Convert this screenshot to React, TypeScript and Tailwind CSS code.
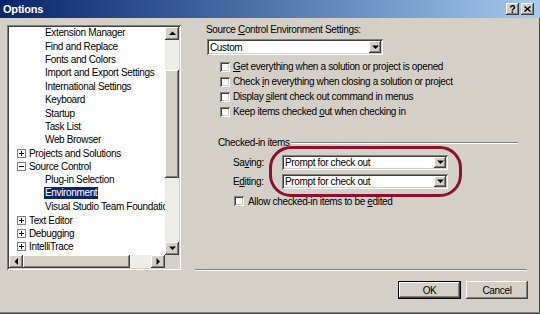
import React from 'react';

const sunken =
  'shadow-[inset_1px_1px_0_#808080,inset_-1px_-1px_0_#ffffff,inset_2px_2px_0_#404040,inset_-2px_-2px_0_#d4d0c8]';
const raised =
  'shadow-[inset_-1px_-1px_0_#404040,inset_1px_1px_0_#ffffff,inset_-2px_-2px_0_#808080,inset_2px_2px_0_#d4d0c8]';

type Dir = 'up' | 'down' | 'left' | 'right';

const Arrow = ({ dir }: { dir: Dir }) => {
  const pts: Record<Dir, string> = {
    up: '0,4 7,4 3.5,0.5',
    down: '0,0.5 7,0.5 3.5,4',
    left: '4,0 4,7 0.5,3.5',
    right: '0.5,0 0.5,7 4,3.5',
  };
  const vertical = dir === 'up' || dir === 'down';
  return (
    <svg width={vertical ? 7 : 5} height={vertical ? 5 : 7} viewBox={vertical ? '0 0 7 5' : '0 0 5 7'}>
      <polygon points={pts[dir]} fill="#000" />
    </svg>
  );
};

const ScrollBtn = ({ dir, className }: { dir: Dir; className: string }) => (
  <div className={`${className} bg-[#d4d0c8] ${raised} flex items-center justify-center shrink-0`}>
    <Arrow dir={dir} />
  </div>
);

interface TreeItem {
  label: string;
  level: 0 | 1;
  expand?: '+' | '-';
  selected?: boolean;
}

const treeItems: TreeItem[] = [
  { label: 'Extension Manager', level: 1 },
  { label: 'Find and Replace', level: 1 },
  { label: 'Fonts and Colors', level: 1 },
  { label: 'Import and Export Settings', level: 1 },
  { label: 'International Settings', level: 1 },
  { label: 'Keyboard', level: 1 },
  { label: 'Startup', level: 1 },
  { label: 'Task List', level: 1 },
  { label: 'Web Browser', level: 1 },
  { label: 'Projects and Solutions', level: 0, expand: '+' },
  { label: 'Source Control', level: 0, expand: '-' },
  { label: 'Plug-in Selection', level: 1 },
  { label: 'Environment', level: 1, selected: true },
  { label: 'Visual Studio Team Foundation Server', level: 1 },
  { label: 'Text Editor', level: 0, expand: '+' },
  { label: 'Debugging', level: 0, expand: '+' },
  { label: 'IntelliTrace', level: 0, expand: '+' },
  { label: 'Windows Forms Designer', level: 0, expand: '+' },
];

const Expander = ({ sign }: { sign: '+' | '-' }) => (
  <div className="w-[9px] h-[9px] border border-[#808080] bg-white flex items-center justify-center shrink-0">
    <svg width="5" height="5" viewBox="0 0 5 5">
      <rect x="0" y="2" width="5" height="1" fill="#000" />
      {sign === '+' && <rect x="2" y="0" width="1" height="5" fill="#000" />}
    </svg>
  </div>
);

const Tree = () => (
  <div className={`w-[174px] h-[245px] bg-white ${sunken} p-[2px] flex flex-col`}>
    <div className="flex flex-1 min-h-0">
      <div className="flex-1 overflow-hidden">
        <div className="-mt-[1px]">
          {treeItems.map((it) => (
            <div key={it.label} className="h-[13.4px] flex items-center whitespace-nowrap">
              {it.level === 0 ? (
                <div className="flex items-center pl-[8px]">
                  <Expander sign={it.expand!} />
                  <span className="ml-[3px]">{it.label}</span>
                </div>
              ) : (
                <div className="pl-[35px]">
                  <span
                    className={
                      it.selected ? 'bg-[#0a246a] text-white px-[1px] leading-[12px] inline-block' : 'px-[1px]'
                    }
                  >
                    {it.label}
                  </span>
                </div>
              )}
            </div>
          ))}
        </div>
      </div>
      {/* vertical scrollbar */}
      <div className="w-[14px] flex flex-col bg-[#eeede8]">
        <ScrollBtn dir="up" className="h-[13px]" />
        <div className="flex-1">
          <div className={`mt-[30px] h-[108px] bg-[#d4d0c8] ${raised}`} />
        </div>
        <ScrollBtn dir="down" className="h-[13px]" />
      </div>
    </div>
    {/* horizontal scrollbar */}
    <div className="h-[13px] flex">
      <div className="flex-1 flex bg-[#eeede8]">
        <ScrollBtn dir="left" className="w-[14px]" />
        <div className={`w-[107px] bg-[#d4d0c8] ${raised}`} />
        <div className="flex-1" />
        <ScrollBtn dir="right" className="w-[14px]" />
      </div>
      <div className="w-[14px] bg-[#d4d0c8]" />
    </div>
  </div>
);

const Combo = ({ value, className }: { value: string; className: string }) => (
  <div className={`${className} bg-white ${sunken} p-[2px] flex`}>
    <div className="flex-1 flex items-center pl-[1px] whitespace-nowrap overflow-hidden">{value}</div>
    <div className={`w-[12px] bg-[#d4d0c8] ${raised} flex items-center justify-center`}>
      <Arrow dir="down" />
    </div>
  </div>
);

const CheckBox = () => <div className={`w-[10px] h-[10px] bg-white ${sunken} shrink-0`} />;

const CheckRow = ({ children }: { children: React.ReactNode }) => (
  <div className="h-[15px] flex items-center gap-[3px] pl-[25px] whitespace-nowrap">
    <CheckBox />
    <span>{children}</span>
  </div>
);

const Button = ({ label, isDefault }: { label: string; isDefault?: boolean }) => (
  <div className={`h-[18px] ${isDefault ? 'w-[63px] border border-black' : 'w-[62px]'} bg-[#d4d0c8]`}>
    <div className={`w-full h-full ${raised} flex items-center justify-center`}>{label}</div>
  </div>
);

export default function App() {
  return (
    <div className="w-[540px] h-[314px] bg-[#d4d0c8] flex flex-col overflow-hidden text-black text-[10px] leading-[11px] tracking-[-0.35px] font-['Liberation_Sans',Arial,sans-serif] shadow-[inset_0_-1px_0_#404040,inset_0_-2px_0_#808080,inset_-1px_0_0_#404040]">
      {/* title bar */}
      <div className="h-[18px] shrink-0 bg-linear-to-r from-[#0a246a] to-[#a6caf0] flex items-center pl-[3px] pr-[6px]">
        <span className="text-white font-bold text-[11px] tracking-[-0.2px]">Options</span>
        <div className="ml-auto flex gap-[2px]">
          <div className={`w-[13px] h-[12px] bg-[#d4d0c8] ${raised} flex items-center justify-center font-bold text-[10px]`}>
            ?
          </div>
          <div className={`w-[13px] h-[12px] bg-[#d4d0c8] ${raised} flex items-center justify-center`}>
            <svg width="7" height="6" viewBox="0 0 7 6">
              <path d="M0.5 0.5 L6.5 5.5 M6.5 0.5 L0.5 5.5" stroke="#000" strokeWidth="1.4" />
            </svg>
          </div>
        </div>
      </div>

      <div className="flex-1 flex min-h-0">
        {/* left tree */}
        <div className="pl-[7px] pt-[7px]">
          <Tree />
        </div>

        {/* right settings */}
        <div className="ml-[14px] w-[333px] flex flex-col pb-[15px]">
          <div className="pt-[6px] pl-[11px] h-[17px]">
            Source <u>C</u>ontrol Environment Settings:
          </div>
          <Combo value="Custom" className="mt-[4px] ml-[12px] w-[176px] h-[16px]" />

          <div className="mt-[4px]">
            <CheckRow>
              <u>G</u>et everything when a solution or project is opened
            </CheckRow>
            <CheckRow>
              Check <u>i</u>n everything when closing a solution or project
            </CheckRow>
            <CheckRow>
              Display <u>s</u>ilent check out command in menus
            </CheckRow>
            <CheckRow>
              Keep items checked <u>o</u>ut when checking in
            </CheckRow>
          </div>

          {/* checked-in items group */}
          <div className="mt-[18px] h-[11px] flex items-center pl-[23px] pr-[10px]">
            <span className="whitespace-nowrap">Checked-in items</span>
            <div className="flex-1 h-[2px] border-t border-[#808080] border-b border-b-white ml-[1px]" />
          </div>

          <div className="relative mt-[7px]">
            <div className="h-[15px] flex items-center pl-[38px]">
              <span className="w-[49px]">
                Sa<u>v</u>ing:
              </span>
              <Combo value="Prompt for check out" className="w-[166px] h-[15px]" />
            </div>
            <div className="h-[15px] flex items-center pl-[38px] mt-[4px]">
              <span className="w-[49px]">
                E<u>d</u>iting:
              </span>
              <Combo value="Prompt for check out" className="w-[166px] h-[15px]" />
            </div>
            {/* red annotation */}
            <div className="absolute left-[74px] top-[-9px] w-[193px] h-[51px] border-[3px] border-[#8a1230] rounded-[22px] pointer-events-none" />
          </div>

          <div className="mt-[5px] h-[14px] flex items-center gap-[4px] pl-[39px] whitespace-nowrap">
            <CheckBox />
            <span>
              Allow checked-in items to be <u>e</u>dited
            </span>
          </div>

          <div className="mt-auto h-[2px] border-t border-[#808080] border-b border-b-white mr-[1px]" />
          <div className="mt-[10px] flex justify-end gap-[5px]">
            <Button label="OK" isDefault />
            <Button label="Cancel" />
          </div>
        </div>
      </div>
    </div>
  );
}
